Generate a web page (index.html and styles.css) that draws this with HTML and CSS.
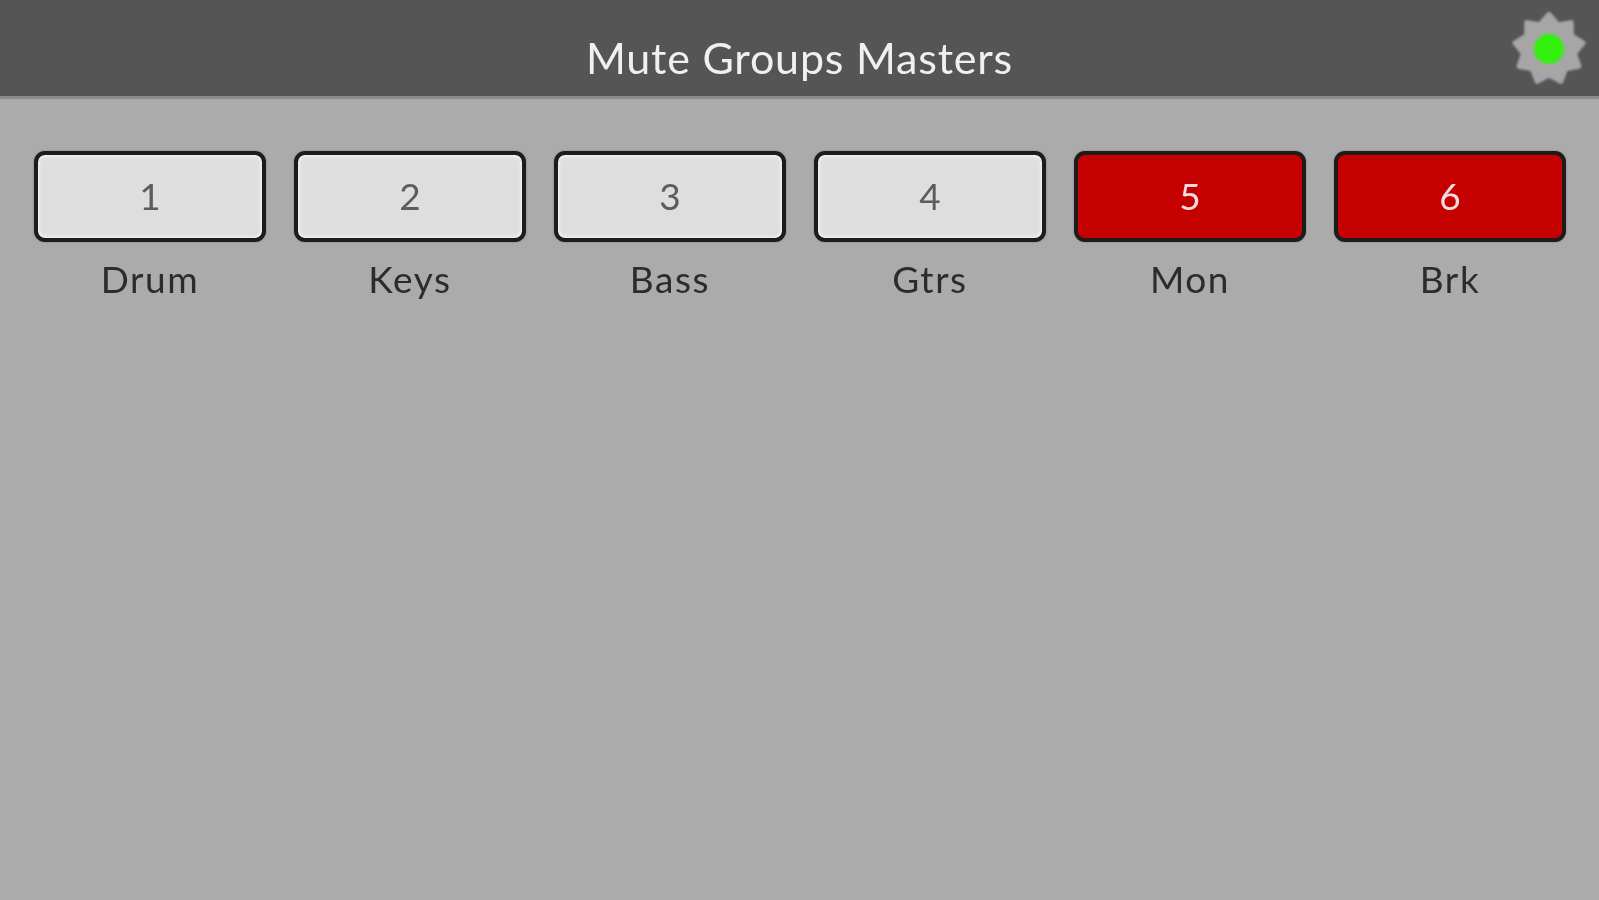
FILE: index.html
```html
<!DOCTYPE html>
<html>
    <head>
        <title>Mute Groups Masters</title>
        <link rel="stylesheet" href="styles.css">
    </head>
    <body>
        <div class="header">
            <p class="title">Mute Groups Masters</p>
            <svg class="gear" viewBox="-42 -42 84 84" width="84" height="84">
                <polygon class="gear-body" points="0,-34.5 8.9,-24.4 22.2,-26.4 22.5,-13 34,-6 25.6,4.5 29.9,17.3 16.7,19.9 11.8,32.4 0,26 -11.8,32.4 -16.7,19.9 -29.9,17.3 -25.6,4.5 -34,-6 -22.5,-13 -22.2,-26.4 -8.9,-24.4"/>
                <circle class="gear-led" cx="0" cy="0" r="15"/>
            </svg>
        </div>
        <div class="groups">
            <div class="group">
                <div class="mute">1</div>
                <p class="label">Drum</p>
            </div>
            <div class="group">
                <div class="mute">2</div>
                <p class="label">Keys</p>
            </div>
            <div class="group">
                <div class="mute">3</div>
                <p class="label">Bass</p>
            </div>
            <div class="group">
                <div class="mute">4</div>
                <p class="label">Gtrs</p>
            </div>
            <div class="group">
                <div class="mute on">5</div>
                <p class="label">Mon</p>
            </div>
            <div class="group">
                <div class="mute on">6</div>
                <p class="label">Brk</p>
            </div>
        </div>
    </body>
</html>
```

FILE: styles.css
```css
html, body {
    height: 100%;
}
body {
    margin: 0;
    overflow: hidden;
    background-color: #ababab;
    font-family: "Lato", "Open Sans", sans-serif;
}
p {
    margin: 0;
}
.header {
    position: relative;
    display: flex;
    justify-content: center;
    height: 96px;
    background-color: #555555;
    border-bottom: 3px solid #8b8b8b;
}
.title {
    padding-top: 33px;
    color: #f0f0f0;
    font-size: 43px;
    letter-spacing: 0.8px;
    line-height: 50px;
    filter: blur(0.7px);
}
.gear {
    position: absolute;
    top: 7px;
    right: 8px;
    filter: blur(1px);
}
.gear-body {
    fill: #a6a6a6;
    stroke: #a6a6a6;
    stroke-width: 5px;
    stroke-linejoin: round;
}
.gear-led {
    fill: #33f00f;
}
.groups {
    display: grid;
    grid-template-columns: repeat(6, 232px);
    column-gap: 28px;
    padding: 52px 33px 0 34px;
}
.group {
    display: flex;
    flex-direction: column;
    align-items: center;
}
.mute {
    box-sizing: border-box;
    width: 100%;
    height: 91px;
    border: 4px solid #1c1c1c;
    border-radius: 11px;
    background-color: #dedede;
    box-shadow: inset 0 0 3px 2px #f0f0f0, 0 0 2px #777777;
    color: #5c5c5c;
    font-size: 37px;
    line-height: 81px;
    text-align: center;
    filter: blur(0.7px);
}
.mute.on {
    background-color: #c40000;
    box-shadow: inset 0 0 2px 1px #d40000, 0 0 2px #777777;
    color: #f4dcdc;
}
.label {
    margin-top: 15px;
    color: #2c2c2c;
    font-size: 37px;
    letter-spacing: 1.6px;
    line-height: 44px;
    filter: blur(0.7px);
}
```
